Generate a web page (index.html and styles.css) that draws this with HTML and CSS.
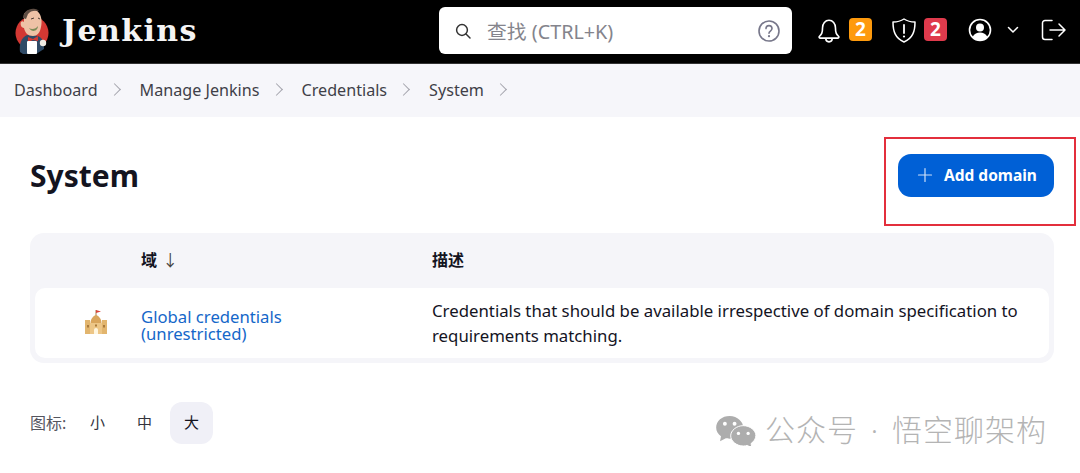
FILE: index.html
```html
<!DOCTYPE html>
<html lang="zh">
<head>
<meta charset="utf-8">
<title>System - Jenkins</title>
<link rel="stylesheet" href="styles.css">
</head>
<body>
<header class="topbar">
  <div class="brand">
    <svg class="logo" viewBox="0 0 36 46" width="36" height="46">
      <circle cx="18" cy="25" r="16.500" fill="#d33833"/>
      <path d="M6 44c-1-8 1-14 7-17l11 1c5 2 6 7 6 13l-8 5H9z" fill="#2f4a66"/>
      <path d="M10 6c3-5 12-6 15-1 3 4 3 10 2 14-1 6-4 9-8 9-5 0-8-3-9-8-3 0-4-4-3-6 1-1 2-1 3 0z" fill="#eec2a6"/>
      <path d="M9 10c0-6 6-10 12-9 2 0 3 1 4 2-5-1-9 0-11 3l-2 5z" fill="#5e4d43"/>
      <path d="M15 20c3 2 7 1 9-2 0 5-6 7-9 2z" fill="#7c8c58"/>
      <path d="M17 11l3-1M24 10l2 1" stroke="#4a3a32" stroke-width="1" fill="none"/>
      <path d="M14 29l5 2 5-3v5l-5-1-5 2z" fill="#d33833"/>
      <rect x="13" y="33" width="10" height="13" rx="1" fill="#fff"/>
      <circle cx="29" cy="35" r="3.200" fill="#f0ebe3"/>
    </svg>
    <span class="wordmark">Jenkins</span>
  </div>
  <div class="search">
    <svg class="search-icon" viewBox="0 0 18 18" width="18" height="18"><circle cx="8" cy="8" r="5.400" fill="none" stroke="#333" stroke-width="1.500"/><path d="M12 12l4 4" stroke="#333" stroke-width="1.500" stroke-linecap="round"/></svg>
    <span class="search-text">查找 (CTRL+K)</span>
    <svg class="help-icon" viewBox="0 0 24 24" width="24" height="24"><circle cx="12" cy="12" r="10" fill="none" stroke="#77778a" stroke-width="1.600"/><path d="M9 9.600c0-4 6-4 6 0 0 2.500-3 2.400-3 4.600" fill="none" stroke="#77778a" stroke-width="1.600" stroke-linecap="round"/><circle cx="12" cy="17.200" r="1.100" fill="#77778a"/></svg>
  </div>
  <div class="actions">
    <div class="action">
      <svg viewBox="0 0 24 26" width="26" height="28"><path d="M3 19c2-2 3-3 3-8 0-4 2.500-7 6-7s6 3 6 7c0 5 1 6 3 8 .5.700 0 1.500-1 1.500H4c-1 0-1.500-.8-1-1.500z" fill="none" stroke="#fff" stroke-width="1.500" stroke-linejoin="round"/><path d="M9 21c0 4 6 4 6 0" fill="none" stroke="#fff" stroke-width="1.500"/></svg>
      <span class="badge badge-orange">2</span>
    </div>
    <div class="action">
      <svg viewBox="0 0 26 26" width="26" height="26"><path d="M13 2c3 2 6 3 11 3 0 9-2 16-11 20C4 21 2 14 2 5c5 0 8-1 11-3z" fill="none" stroke="#fff" stroke-width="1.500" stroke-linejoin="round"/><path d="M13 8v8" stroke="#fff" stroke-width="1.800" stroke-linecap="round"/><circle cx="13" cy="19.500" r="1.100" fill="#fff"/></svg>
      <span class="badge badge-red">2</span>
    </div>
    <div class="user">
      <svg viewBox="0 0 24 24" width="24" height="24"><circle cx="12" cy="12" r="10.500" fill="none" stroke="#fff" stroke-width="1.600"/><circle cx="12" cy="9.500" r="4" fill="#fff"/><path d="M4.500 19c2-3.500 4.500-4.500 7.500-4.500s5.500 1 7.500 4.500c-4 4.700-11 4.700-15 0z" fill="#fff"/></svg>
      <svg class="chev" viewBox="0 0 12 8" width="12" height="8"><path d="M1.500 1.500L6 6l4.500-4.500" fill="none" stroke="#fff" stroke-width="1.500" stroke-linecap="round" stroke-linejoin="round"/></svg>
    </div>
    <svg viewBox="0 0 26 22" width="26" height="22"><path d="M11 1.500H4A2.500 2.500 0 0 0 1.500 4v14A2.500 2.500 0 0 0 4 20.500h7" fill="none" stroke="#fff" stroke-width="1.500" stroke-linecap="round"/><path d="M9 11h15M18 5l6 6-6 6" fill="none" stroke="#fff" stroke-width="1.500" stroke-linecap="round" stroke-linejoin="round"/></svg>
  </div>
</header>
<nav class="crumbs">
  <span>Dashboard</span><i class="sep"></i>
  <span>Manage Jenkins</span><i class="sep"></i>
  <span>Credentials</span><i class="sep"></i>
  <span>System</span><i class="sep"></i>
</nav>
<main class="content">
  <div class="title-row">
    <h1>System</h1>
    <button class="add-btn"><svg viewBox="0 0 16 16" width="16" height="16"><path d="M8 1.500v13M1.500 8h13" stroke="#cfe0f7" stroke-width="1.200" stroke-linecap="round"/></svg>Add domain</button>
  </div>
  <section class="table">
    <div class="thead">
      <span></span>
      <span class="th">域 <b class="arrow">↓</b></span>
      <span class="th">描述</span>
    </div>
    <div class="trow">
      <span class="cell-icon">
        <svg viewBox="0 0 24 26" width="24" height="26"><path d="M12 7V1" stroke="#a08050" stroke-width="1"/><path d="M12 1l5 1.500-5 1.500z" fill="#d9453c"/><path d="M6.500 14c0-4 2.500-7 5.500-8 3 1 5.500 4 5.500 8z" fill="#d9a55c"/><path d="M1 11h5v3h12v-3h5v14H1z" fill="#e2b56e"/><rect x="6" y="14" width="12" height="11" fill="#edc687"/><path d="M10 25v-4a2 2 0 0 1 4 0v4z" fill="#fff6e0"/><rect x="3" y="16" width="2" height="2.500" fill="#a97a3c"/><rect x="19" y="16" width="2" height="2.500" fill="#a97a3c"/><rect x="11" y="15.500" width="2" height="2" fill="#a97a3c"/></svg>
      </span>
      <a class="link">Global credentials (unrestricted)</a>
      <span class="desc">Credentials that should be available irrespective of domain specification to requirements matching.</span>
    </div>
  </section>
  <div class="sizes">
    <span class="sizes-label">图标:</span>
    <span class="size">小</span>
    <span class="size">中</span>
    <span class="size size-on">大</span>
  </div>
</main>
<div class="annotation"></div>
<div class="watermark">
  <svg viewBox="0 0 44 32" width="43" height="31"><path d="M15 1C7 1 1 6 1 13c0 4 2 7 5 9l-1 5 6-3c1 .3 2 .4 4 .4C23 24 29 19 29 13S23 1 15 1z" fill="#adadad"/><path d="M29 11c-7 0-13 5-13 10.500S22 32 29 32c1.500 0 3-.2 4-.6l5 2.600-1-4.500c3-2 5-5 5-8.500C42 16 36 11 29 11z" fill="#adadad" stroke="#fff" stroke-width="1"/><circle cx="10" cy="9" r="2" fill="#fff"/><circle cx="20" cy="9" r="2" fill="#fff"/><circle cx="24" cy="19" r="1.700" fill="#fff"/><circle cx="34" cy="19" r="1.700" fill="#fff"/></svg>
  <span class="mark-text">公众号 · 悟空聊架构</span>
</div>
</body>
</html>
```
FILE: styles.css
```css
* { box-sizing: border-box; }
html, body { margin: 0; height: 473px; overflow: hidden; }
body { position: relative; background: #fff; color: #14141f; font-family: "Noto Sans", "Noto Sans CJK SC", sans-serif; }

.topbar { height: 64px; background: #000; border-bottom: 1px solid #333; display: flex; align-items: center; padding-left: 14px; }
.brand { width: 425px; display: flex; align-items: center; margin-top: -2px; }
.logo { display: block; }
.wordmark { margin-left: 12px; font: bold 30px/1 "DejaVu Serif", serif; color: #f4f4f4; letter-spacing: 1.400px; }

.search { width: 353px; height: 47px; margin-top: -2px; background: #fff; border-radius: 6px; display: flex; align-items: center; padding: 0 11px 0 15px; }
.search-text { flex: 1; margin-left: 15px; font-size: 19.800px; color: #84848c; }

.actions { display: flex; align-items: center; margin-left: 24px; margin-top: -4px; }
.actions svg { display: block; }
.action { display: flex; align-items: center; gap: 7px; margin-right: 19px; }
.badge { width: 23px; height: 23px; border-radius: 4px; color: #fff; font-size: 19px; font-weight: 700; line-height: 23px; text-align: center; }
.badge-orange { background: #fe9a0d; }
.badge-red { background: #df3a4c; }
.action + .action { margin-right: 21px; }
.user { display: flex; align-items: center; gap: 15px; margin-right: 22px; }

.crumbs { height: 53px; background: #f6f6fa; display: flex; align-items: center; padding: 0 0 2px 14px; font-size: 16.150px; color: #3f3f48; }
.sep { width: 9px; height: 9px; margin: 0 21px 0 12px; border-top: 1.500px solid #a4a4ac; border-right: 1.500px solid #a4a4ac; transform: rotate(45deg); }

.content { padding: 0 26px 0 30px; }
.title-row { height: 116px; display: flex; justify-content: space-between; align-items: center; }
h1 { margin: 2px 0 0; font-size: 30px; font-weight: 700; line-height: 1; }
.add-btn { width: 156px; height: 43px; border: 0; border-radius: 13px; background: #0060d6; color: #fff; display: flex; align-items: center; gap: 11px; padding: 0 0 0 19px; font: 700 15.500px "Noto Sans", sans-serif; }

.table { background: #f5f5f9; border-radius: 14px; padding: 0 5px 5px; }
.thead, .trow { display: grid; grid-template-columns: 106px 291px 1fr; align-items: center; }
.thead { height: 55px; }
.th { font-size: 16px; font-weight: 700; padding-bottom: 3px; }
.arrow { font-weight: 400; margin-left: 1px; color: #444; }
.trow { height: 70px; background: #fff; border-radius: 10px; }
.cell-icon { display: flex; justify-content: center; padding: 0 0 2px 16px; }
.link { color: #1567c9; font-size: 16.700px; line-height: 17px; display: block; max-width: 170px; padding-top: 4px; }
.desc { font-size: 16.800px; line-height: 25px; padding: 0 10px 0 0; color: #14141f; }

.sizes { margin-top: 39px; display: flex; align-items: center; font-size: 15px; color: #55555f; }
.sizes-label { width: 46px; font-size: 16px; padding-bottom: 2px; white-space: nowrap; }
.size { width: 43px; height: 42px; margin-right: 4px; border-radius: 12px; display: flex; align-items: center; justify-content: center; padding-bottom: 3px; color: #33333d; }
.size-on { background: #f0f0f7; color: #14141f; }

.annotation { position: absolute; left: 884px; top: 137px; width: 192px; height: 89px; border: 2px solid #e32f3c; }
.watermark { position: absolute; left: 715px; top: 412px; display: flex; align-items: center; gap: 7px; color: #b4b4b4; }
.mark-text { font-size: 30px; line-height: 36px; font-weight: 300; letter-spacing: 1px; word-spacing: 4px; }
```
